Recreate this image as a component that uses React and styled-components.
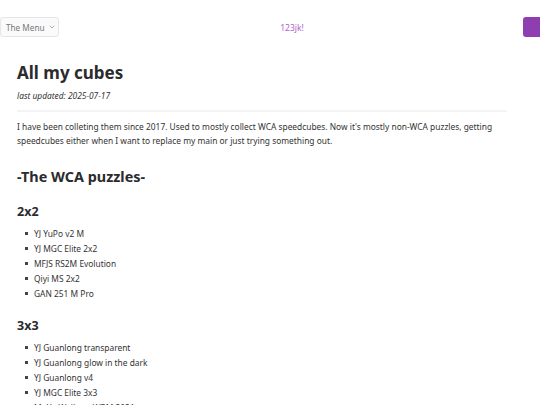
import React from "react";
import styled, { createGlobalStyle } from "styled-components";

const Global = createGlobalStyle`
  html, body { margin: 0; padding: 0; background: #fff; }
  body { font-family: "Noto Sans", "Open Sans", sans-serif; color: #333; overflow: hidden; }
  * { box-sizing: border-box; }
`;

const TopBar = styled.header`
  display: flex;
  align-items: center;
  justify-content: space-between;
  height: 54px;
`;

const MenuButton = styled.button`
  display: flex;
  align-items: center;
  gap: 4px;
  height: 20px;
  padding: 0 0 0 5px;
  border: 1px solid #e6e6ea;
  border-radius: 3px;
  background: #fafafb;
  color: #777;
  font-family: inherit;
  font-size: 8.2px;
  white-space: nowrap;
  width: 59px;
`;

const Brand = styled.span`
  color: #b062cc;
  font-size: 8.5px;
  margin-left: 2px;
`;

const ThemeSquare = styled.div`
  width: 17px;
  height: 20px;
  border-radius: 3px 0 0 3px;
  background: #8f3eb2;
`;

const Main = styled.main`
  padding: 7px 33px 0 17px;
`;

const Title = styled.h1`
  margin: 0;
  font-size: 17px;
  font-weight: 700;
  color: #2b2b2e;
  line-height: 24px;
`;

const Updated = styled.p`
  margin: 5px 0 0;
  font-size: 8.4px;
  font-style: italic;
  color: #333;
`;

const Rule = styled.hr`
  border: none;
  height: 2px;
  background: #f4f4f6;
  margin: 9px 0 8px;
`;

const Para = styled.p`
  margin: 0;
  font-size: 8.4px;
  line-height: 13.5px;
  color: #333;
`;

const H2 = styled.h2`
  margin: 20px 0 0;
  font-size: 14.4px;
  font-weight: 700;
  color: #2b2b2e;
  line-height: 20px;
`;

const H3 = styled.h3`
  margin: 15px 0 0;
  font-size: 12.5px;
  font-weight: 700;
  color: #2b2b2e;
  line-height: 20px;
`;

const List = styled.ul`
  margin: 4px 0 0;
  padding: 0 0 0 17px;
  list-style: none;
`;

const Item = styled.li`
  position: relative;
  font-size: 8.4px;
  line-height: 15px;
  color: #333;
  &::before {
    content: "";
    position: absolute;
    left: -9px;
    top: 6px;
    width: 3px;
    height: 3px;
    background: #444;
  }
`;

const Chevron = () => (
  <svg width="6" height="4" viewBox="0 0 6 4" fill="none">
    <path d="M0.8 0.8 L3 3 L5.2 0.8" stroke="#999" strokeWidth="0.8" />
  </svg>
);

const groups = [
  { name: "2x2", items: ["YJ YuPo v2 M", "YJ MGC Elite 2x2", "MFJS RS2M Evolution", "Qiyi MS 2x2", "GAN 251 M Pro"] },
  { name: "3x3", items: ["YJ Guanlong transparent", "YJ Guanlong glow in the dark", "YJ Guanlong v4", "YJ MGC Elite 3x3", "MoYu Weilong WRM 2021"] },
];

export default function App() {
  return (
    <>
      <Global />
      <TopBar>
        <MenuButton>
          The Menu <Chevron />
        </MenuButton>
        <Brand>123jk!</Brand>
        <ThemeSquare />
      </TopBar>
      <Main>
        <Title>All my cubes</Title>
        <Updated>last updated: 2025-07-17</Updated>
        <Rule />
        <Para>
          I have been colleting them since 2017. Used to mostly collect WCA speedcubes. Now it's mostly non-WCA puzzles, getting speedcubes either when I want to replace my main or just trying something out.
        </Para>
        <H2>-The WCA puzzles-</H2>
        {groups.map((g) => (
          <section key={g.name}>
            <H3>{g.name}</H3>
            <List>
              {g.items.map((it) => (
                <Item key={it}>{it}</Item>
              ))}
            </List>
          </section>
        ))}
      </Main>
    </>
  );
}
